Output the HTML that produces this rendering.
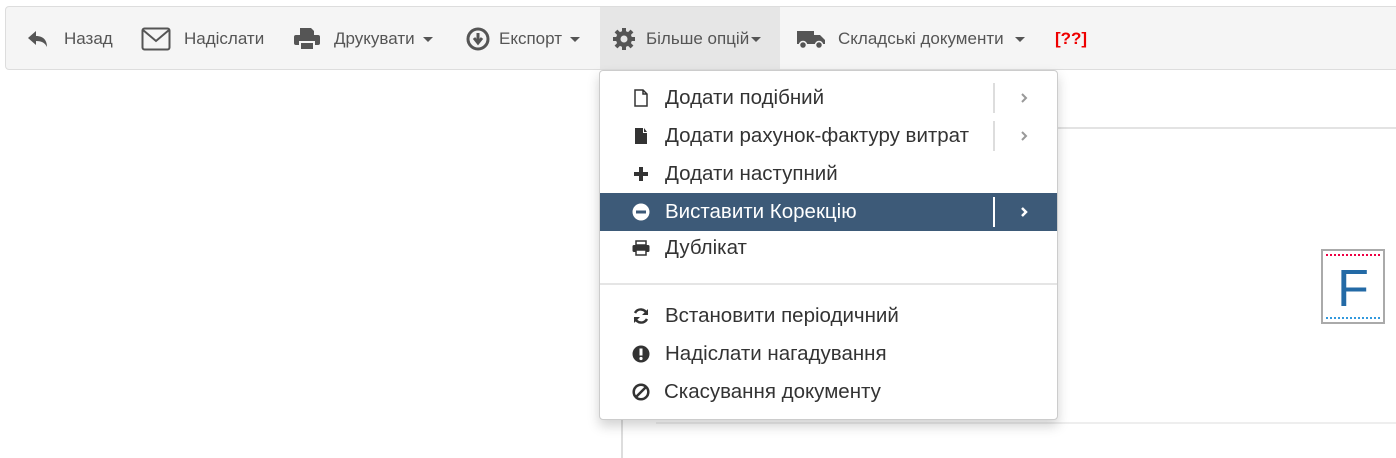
<!DOCTYPE html>
<html><head><meta charset="utf-8"><style>
body{margin:0;width:1396px;height:452px;background:#fff;font-family:"Liberation Sans",sans-serif;position:relative;overflow:hidden}
.tb{position:absolute;left:5px;top:6px;width:1400px;height:62px;background:#f5f5f5;border:1px solid #ddd;border-radius:4px}
.ico{position:absolute;top:0;height:64px;display:flex;align-items:center}
.tx{position:absolute;top:0;height:64px;display:flex;align-items:center;font-size:17px;color:#555;white-space:nowrap}
.caret{display:inline-block;width:0;height:0;border-left:5px solid transparent;border-right:5px solid transparent;border-top:5px solid #555;margin-left:8px}
.menu{position:absolute;left:599px;top:70px;width:457px;height:348px;background:#fff;border:1px solid #ccc;border-radius:4px;box-shadow:0 6px 12px rgba(0,0,0,.18)}
.it{position:absolute;left:0;width:457px;height:38px;display:flex;align-items:center;font-size:20.5px;color:#333}
.it .ic{position:absolute;left:32px;width:18px;height:18px;display:flex;align-items:center;justify-content:center}
.it .t{position:absolute;left:65px;white-space:nowrap}
.it .sep{position:absolute;left:393px;top:4px;height:30px;border-left:2px solid #ddd}
.it .ar{position:absolute;left:419px;top:13px}
.hl{background:#3d5a78;color:#fff}
.hl .sep{border-color:#fff}
</style></head><body>
<div style="position:absolute;left:1056px;top:127px;width:340px;border-top:2px solid #e3e3e3"></div>
<div style="position:absolute;left:621px;top:418px;height:40px;border-left:2px solid #ddd"></div>
<div style="position:absolute;left:656px;top:422px;width:740px;border-top:2px solid #eee"></div>
<div style="position:absolute;left:1321px;top:249px;width:64px;height:75px;border:2px solid #aaa;box-sizing:border-box;background:#fff">
<div style="position:absolute;left:3px;right:3px;top:3px;border-top:2px dotted #e04;"></div>
<div style="position:absolute;left:3px;right:3px;bottom:3px;border-top:2px dotted #39d;"></div>
<div style="position:absolute;left:0;right:0;top:10px;text-align:center;font-size:52px;color:#236aa6;line-height:56px">F</div></div>
<div class="tb">
<div style="position:absolute;left:594px;top:0;width:180px;height:62px;background:#e6e6e6"></div>
<div class="ico" style="left:21px"><svg width="22" height="18" viewBox="0 0 22 18"><path d="M9 1L1 8l8 7v-4c6 0 9 2 11 6 0-6-3-11-11-11z" fill="#555"/></svg></div>
<div class="tx" style="left:58px">Назад</div>
<div class="ico" style="left:135px"><svg width="30" height="24" viewBox="0 0 30 24"><rect x="1.5" y="1.5" width="27" height="21" rx="2" fill="none" stroke="#555" stroke-width="2"/><path d="M2 3l13 11 13-11" fill="none" stroke="#555" stroke-width="2"/></svg></div>
<div class="tx" style="left:178px">Надіслати</div>
<div class="ico" style="left:287px"><svg width="28" height="24" viewBox="0 0 28 24"><path d="M7 1h11l3 3v4H7z" fill="#555"/><rect x="1" y="8" width="26" height="10" rx="2" fill="#555"/><rect x="7" y="15" width="14" height="8" fill="#555" stroke="#f5f5f5" stroke-width="2"/></svg></div>
<div class="tx" style="left:328px">Друкувати<span class="caret"></span></div>
<div class="ico" style="left:460px"><svg width="24" height="24" viewBox="0 0 24 24"><circle cx="12" cy="12" r="10" fill="none" stroke="#555" stroke-width="3"/><path d="M12 6v9M8 11l4 5 4-5" stroke="#555" stroke-width="3" fill="none"/></svg></div>
<div class="tx" style="left:493px">Експорт<span class="caret"></span></div>
<div class="ico" style="left:606px"><svg width="24" height="24" viewBox="0 0 24 24"><g fill="#555"><circle cx="12" cy="12" r="8"/><g stroke="#555" stroke-width="4"><path d="M12 1v22M1 12h22M4 4l16 16M20 4L4 20"/></g></g><circle cx="12" cy="12" r="3.5" fill="#e6e6e6"/></svg></div>
<div class="tx" style="left:640px">Більше опцій<span class="caret" style="margin-left:2px"></span></div>
<div class="ico" style="left:790px"><svg width="30" height="22" viewBox="0 0 30 22"><path d="M1 3h17v13H1zM18 7h6l5 5v4H18z" fill="#555"/><circle cx="7" cy="17" r="3.5" fill="#555" stroke="#f5f5f5" stroke-width="1.5"/><circle cx="23" cy="17" r="3.5" fill="#555" stroke="#f5f5f5" stroke-width="1.5"/></svg></div>
<div class="tx" style="left:832px">Складські документи<span class="caret" style="margin-left:11px"></span></div>
<div class="tx" style="left:1049px;color:#e00;font-weight:bold">[??]</div>
</div>
<div class="menu">
<div class="it" style="top:8px"><span class="ic"><svg width="14" height="18" viewBox="0 0 14 18"><path d="M1 1h8l4 4v12H1z M9 1v4h4" fill="none" stroke="#333" stroke-width="1.5"/></svg></span><span class="t">Додати подібний</span><span class="sep"></span><svg class="ar" width="10" height="12" viewBox="0 0 10 12"><path d="M3 2l4 4-4 4" fill="none" stroke="#999" stroke-width="2"/></svg></div>
<div class="it" style="top:46px"><span class="ic"><svg width="14" height="18" viewBox="0 0 14 18"><path d="M1 1h8v5h4v11H1zM10 1l3 4h-3z" fill="#333"/></svg></span><span class="t">Додати рахунок-фактуру витрат</span><span class="sep"></span><svg class="ar" width="10" height="12" viewBox="0 0 10 12"><path d="M3 2l4 4-4 4" fill="none" stroke="#999" stroke-width="2"/></svg></div>
<div class="it" style="top:84px"><span class="ic"><svg width="16" height="16" viewBox="0 0 16 16"><path d="M8 1v14M1 8h14" stroke="#333" stroke-width="4"/></svg></span><span class="t">Додати наступний</span></div>
<div class="it hl" style="top:122px"><span class="ic"><svg width="18" height="18" viewBox="0 0 18 18"><circle cx="9" cy="9" r="8.5" fill="#fff"/><rect x="4" y="7.5" width="10" height="3" fill="#3d5a78"/></svg></span><span class="t">Виставити Корекцію</span><span class="sep"></span><svg class="ar" width="10" height="12" viewBox="0 0 10 12"><path d="M3 2l4 4-4 4" fill="none" stroke="#fff" stroke-width="2.5"/></svg></div>
<div class="it" style="top:158px"><span class="ic"><svg width="18" height="16" viewBox="0 0 18 16"><path d="M4 1h10v4H4z" fill="none" stroke="#333" stroke-width="1.5"/><rect x="0.5" y="5" width="17" height="7" rx="1.5" fill="#333"/><rect x="4" y="10" width="10" height="5" fill="#fff" stroke="#333" stroke-width="1.5"/></svg></span><span class="t">Дублікат</span></div>
<div style="position:absolute;left:0;top:212px;width:457px;border-top:2px solid #e5e5e5"></div>
<div class="it" style="top:226px"><span class="ic"><svg width="18" height="18" viewBox="0 0 18 18"><path d="M15 7A6.5 6.5 0 0 0 3 6M3 11a6.5 6.5 0 0 0 12 1" fill="none" stroke="#333" stroke-width="2.5"/><path d="M16 2v6h-6zM2 16v-6h6z" fill="#333"/></svg></span><span class="t">Встановити періодичний</span></div>
<div class="it" style="top:264px"><span class="ic"><svg width="18" height="18" viewBox="0 0 18 18"><circle cx="9" cy="9" r="8.5" fill="#333"/><path d="M9 3.5v7" stroke="#fff" stroke-width="3"/><circle cx="9" cy="13.5" r="1.6" fill="#fff"/></svg></span><span class="t">Надіслати нагадування</span></div>
<div class="it" style="top:302px"><span class="ic"><svg width="18" height="18" viewBox="0 0 18 18"><circle cx="9" cy="9" r="7.3" fill="none" stroke="#333" stroke-width="2.5"/><path d="M4 14L14 4" stroke="#333" stroke-width="2.5"/></svg></span><span class="t" style="left:64px">Скасування документу</span></div>
</div>
</body></html>
